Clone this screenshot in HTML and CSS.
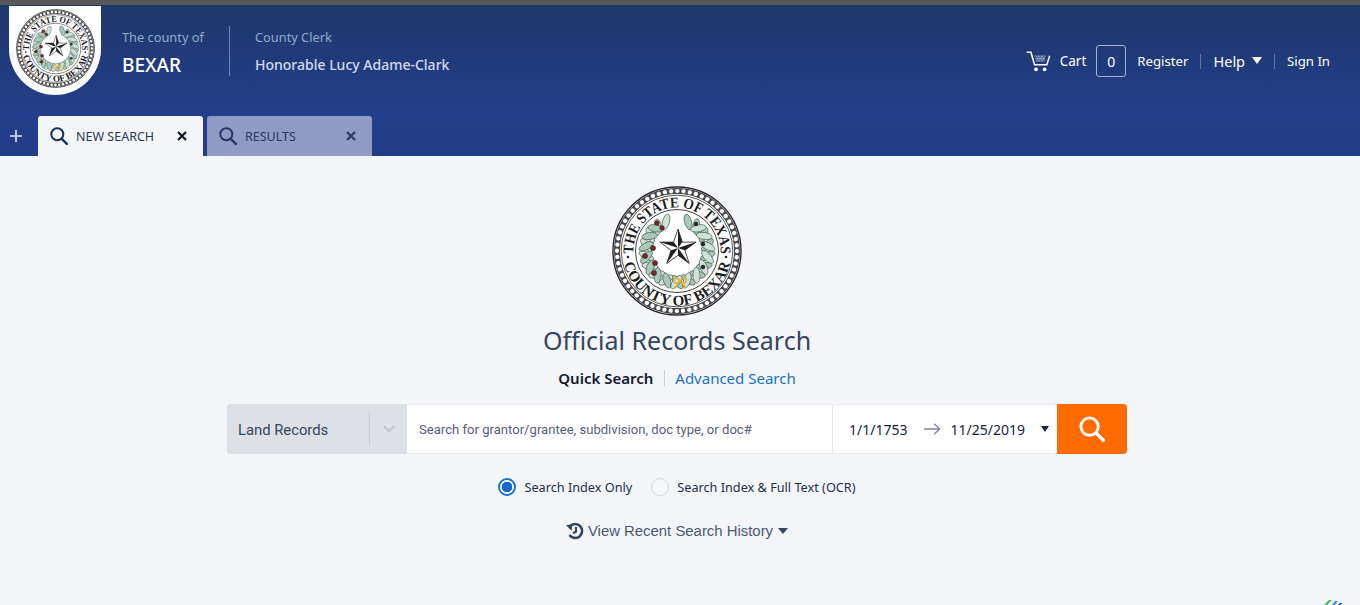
FILE: index.html
```html
<!DOCTYPE html>
<html lang="en">
<head>
<meta charset="utf-8">
<title>Official Records Search</title>
<link rel="stylesheet" href="styles.css">
</head>
<body>
<svg class="defs" width="0" height="0" aria-hidden="true">
  <defs>
    <g id="lp">
      <ellipse cx="59" cy="34.500" rx="3.500" ry="8" transform="rotate(-48 59 34.500)" fill="#a9c9b8" stroke="#2f3d36" stroke-width=".55"/>
      <ellipse cx="71" cy="34.500" rx="3.500" ry="8" transform="rotate(48 71 34.500)" fill="#cfe2d6" stroke="#2f3d36" stroke-width=".55"/>
    </g>
    <symbol id="seal" viewBox="0 0 130 130">
      <circle cx="65" cy="65" r="64" fill="#fff" stroke="#2a2a2c" stroke-width="1.4"/>
      <circle cx="65" cy="65" r="60" fill="none" stroke="#4a4a4c" stroke-width="6"/>
      <circle cx="65" cy="65" r="60" fill="none" stroke="#fff" stroke-width="4.2" stroke-linecap="round" stroke-dasharray="0.1 6.18"/>
      <circle cx="65" cy="65" r="55.8" fill="none" stroke="#2a2a2c" stroke-width=".8"/>
      <circle cx="65" cy="65" r="41.5" fill="none" stroke="#2a2a2c" stroke-width=".9"/>
      <path id="arcTop" d="M65 108.500a43.500 43.500 0 1 1 .01 0" fill="none"/>
      <path id="arcBot" d="M65 10.500a54.500 54.500 0 1 0 .01 0" fill="none"/>
      <text class="seal-text"><textPath href="#arcTop" startOffset="50%" text-anchor="middle" textLength="142" lengthAdjust="spacingAndGlyphs">THE STATE OF TEXAS</textPath></text>
      <text class="seal-text"><textPath href="#arcBot" startOffset="50%" text-anchor="middle" textLength="146" lengthAdjust="spacingAndGlyphs">COUNTY OF BEXAR</textPath></text>
      <circle cx="16" cy="71" r="1.3" fill="#222"/>
      <circle cx="114" cy="71" r="1.3" fill="#222"/>
      <use href="#lp" transform="rotate(190 65 65)"/>
      <use href="#lp" transform="rotate(210 65 65)"/>
      <use href="#lp" transform="rotate(230 65 65)"/>
      <use href="#lp" transform="rotate(250 65 65)"/>
      <use href="#lp" transform="rotate(270 65 65)"/>
      <use href="#lp" transform="rotate(290 65 65)"/>
      <use href="#lp" transform="rotate(310 65 65)"/>
      <use href="#lp" transform="rotate(328 65 65)"/>
      <use href="#lp" transform="rotate(170 65 65)"/>
      <use href="#lp" transform="rotate(150 65 65)"/>
      <use href="#lp" transform="rotate(130 65 65)"/>
      <use href="#lp" transform="rotate(110 65 65)"/>
      <use href="#lp" transform="rotate(90 65 65)"/>
      <use href="#lp" transform="rotate(70 65 65)"/>
      <use href="#lp" transform="rotate(50 65 65)"/>
      <use href="#lp" transform="rotate(32 65 65)"/>
      <g fill="#6d2a2a" stroke="#2b1414" stroke-width=".4">
        <circle cx="45" cy="37" r="2.4"/><circle cx="50" cy="42" r="2.4"/><circle cx="41" cy="62" r="2.6"/>
        <circle cx="33" cy="70" r="2.6"/><circle cx="43" cy="77" r="2.6"/><circle cx="42" cy="87" r="2.6"/>
      </g>
      <g fill="#2b2b2b">
        <circle cx="84" cy="38" r="2.2"/><circle cx="91" cy="58" r="2.2"/><circle cx="91" cy="81" r="2.2"/>
      </g>
      <polygon points="66,43 70.3,56.1 84.1,56.1 72.9,64.3 77.2,77.4 66,69.3 54.8,77.4 59.1,64.3 47.9,56.1 61.7,56.1" fill="#fff" stroke="#1f1f22" stroke-width=".8"/>
      <g fill="#1f1f22">
        <polygon points="66,62 66,43 70.3,56.1"/><polygon points="66,62 84.1,56.1 72.9,64.3"/>
        <polygon points="66,62 77.2,77.4 66,69.3"/><polygon points="66,62 54.8,77.4 59.1,64.3"/>
        <polygon points="66,62 47.9,56.1 61.7,56.1"/>
      </g>
      <path d="M68 95c-4-5-7-4-6 0s4 2 6 0c2 2 5 4 6 0s-2-5-6 0l-6 8M68 95l6 7" fill="none" stroke="#d9b23a" stroke-width="1.6"/>
    </symbol>
    <symbol id="mag" viewBox="0 0 18 18">
      <circle cx="7.3" cy="7.3" r="6" fill="none" stroke="currentColor" stroke-width="2"/>
      <path d="M11.8 11.8l5 5" stroke="currentColor" stroke-width="2.4" stroke-linecap="round"/>
    </symbol>
    <symbol id="cross" viewBox="0 0 10 10">
      <path d="M1 1l8 8M9 1l-8 8" stroke="currentColor" stroke-width="2.2" fill="none"/>
    </symbol>
  </defs>
</svg>

<div class="topline"></div>
<header class="masthead">
  <div class="brand-row">
    <div class="crest"><svg class="crest-seal"><use href="#seal"/></svg></div>
    <div class="brand-block county">
      <div class="brand-label">The county of</div>
      <div class="brand-name">BEXAR</div>
    </div>
    <div class="brand-block clerk">
      <div class="brand-label">County Clerk</div>
      <div class="brand-person">Honorable Lucy Adame-Clark</div>
    </div>
    <nav class="user-nav">
      <svg class="cart-icon" viewBox="0 0 25 21">
        <path d="M.7 1.2h4.2l3.7 12.6h12.2l2.9-9" fill="none" stroke="#fff" stroke-width="1.5"/>
        <path d="M8 5h12M9 7.5h10M10 10h8M10 5l3 5M13 5l3 5M16 5l3 5M19 5l-3 5M16 5l-3 5M13 5l-3 5" stroke="#b9c6de" stroke-width=".6"/>
        <circle cx="10" cy="18.3" r="1.9" fill="#fff"/><circle cx="18.6" cy="18.3" r="1.9" fill="#fff"/>
      </svg>
      <span class="cart-label">Cart</span>
      <span class="cart-count">0</span>
      <a class="nav-link register">Register</a>
      <span class="nav-sep"></span>
      <a class="nav-link help">Help</a>
      <span class="caret caret-white"></span>
      <span class="nav-sep"></span>
      <a class="nav-link">Sign In</a>
    </nav>
  </div>
  <div class="tab-row">
    <svg class="plus" viewBox="0 0 12 12"><path d="M6 0v12M0 6h12" stroke="#dfe5f2" stroke-width="1.6"/></svg>
    <div class="tab tab-active">
      <svg class="tab-mag"><use href="#mag"/></svg>
      <span class="tab-title">NEW SEARCH</span>
      <svg class="tab-x"><use href="#cross"/></svg>
    </div>
    <div class="tab tab-idle">
      <svg class="tab-mag"><use href="#mag"/></svg>
      <span class="tab-title">RESULTS</span>
      <svg class="tab-x"><use href="#cross"/></svg>
    </div>
  </div>
</header>

<main class="content">
  <svg class="main-seal"><use href="#seal"/></svg>
  <h1 class="title">Official Records Search</h1>
  <div class="mode-links">
    <a class="mode-active">Quick Search</a>
    <a class="mode-link">Advanced Search</a>
  </div>
  <form class="search-bar">
    <div class="category">
      <span class="category-text">Land Records</span>
      <span class="category-arrow">
        <svg viewBox="0 0 12 8" class="chev"><path d="M1 1.2l5 5 5-5" fill="none" stroke="#c2c6cd" stroke-width="2"/></svg>
      </span>
    </div>
    <div class="query">Search for grantor/grantee, subdivision, doc type, or doc#</div>
    <div class="dates">
      <span>1/1/1753</span>
      <svg class="arrow" viewBox="0 0 17 12"><path d="M0 6h15.5M10 .8L15.8 6 10 11.2" fill="none" stroke="#7d8699" stroke-width="1.3"/></svg>
      <span>11/25/2019</span>
      <span class="caret caret-dark"></span>
    </div>
    <div class="go">
      <svg class="go-icon"><use href="#mag"/></svg>
    </div>
  </form>
  <div class="radios">
    <span class="radio radio-on"></span><span class="radio-text">Search Index Only</span>
    <span class="radio radio-off"></span><span class="radio-text">Search Index &amp; Full Text (OCR)</span>
  </div>
  <div class="history">
    <svg class="history-icon" viewBox="0 0 18 18">
      <path d="M4 4.2A7 7 0 1 1 3.4 13" fill="none" stroke="#36455f" stroke-width="2.6"/>
      <path d="M0 3.2l6.4-.9-.9 6.4z" fill="#36455f"/>
      <path d="M10 5v4.6l-3 1.6" fill="none" stroke="#36455f" stroke-width="2.2"/>
    </svg>
    <span>View Recent Search History</span>
    <span class="caret caret-slate"></span>
  </div>
</main>

<svg class="corner-mark" viewBox="0 0 22 6">
  <path d="M0 7L6 1h3L3 7z" fill="#4fb35c"/>
  <path d="M8 7l4-5h3l-4 5z" fill="#3d97d6"/>
  <path d="M14 7l2.500-3h3l-2.500 3z" fill="#3c5bb0"/>
</svg>
</body>
</html>
```
FILE: styles.css
```css
* { box-sizing: border-box; }
html, body { margin: 0; height: 605px; overflow: hidden; }
body { background: #f4f5f8; font-family: "Noto Sans", sans-serif; position: relative; }
.defs { position: absolute; }
.seal-text { font-family: "Liberation Serif", serif; font-weight: 700; font-size: 15px; fill: #1c1c1f; }

.topline { height: 5px; background: #58585a; }
.masthead { height: 151px; background: linear-gradient(180deg, #1d3869 0%, #233e8a 70%, #223c88 100%); display: flex; flex-direction: column; }
.brand-row { height: 111px; display: flex; align-items: flex-start; padding: 0 30px 0 9px; }
.crest { width: 92px; height: 89px; margin-top: 1px; background: #fff; border-radius: 0 0 46px 46px; display: flex; justify-content: center; padding-top: 3px; flex: none; }
.crest-seal { width: 79px; height: 79px; }
.brand-block { display: flex; flex-direction: column; margin-top: 21px; height: 50px; }
.county { margin-left: 21px; width: 108px; border-right: 1px solid #7186ae; }
.clerk { margin-left: 25px; }
.brand-label { font-size: 12.8px; line-height: 22px; color: #8eaccb; }
.brand-name { margin-top: 4px; font-size: 19px; line-height: 26px; font-weight: 500; color: #fff; }
.brand-person { margin-top: 4px; font-size: 14px; line-height: 26px; font-weight: 500; color: #d3dcee; }

.user-nav { margin-left: auto; margin-top: 40px; height: 32px; display: flex; align-items: center; color: #fff; font-size: 13.2px; }
.cart-icon { width: 25px; height: 21px; }
.cart-label { margin-left: 9px; font-size: 13.5px; }
.cart-count { margin-left: 10px; width: 30px; height: 32px; display: flex; align-items: center; justify-content: center; border: 1px solid #a6b3cf; border-radius: 3px; font-size: 14px; }
.nav-link { color: #fff; }
.register { margin-left: 11px; }
.help { font-size: 14.5px; }
.nav-sep { width: 1px; height: 15px; background: #62779f; margin: 0 12px; }
.caret { display: inline-block; width: 0; height: 0; border-style: solid; border-color: transparent; border-bottom-width: 0; }
.caret-white { margin-left: 7px; margin-top: -2px; border-width: 7px 5px 0; border-top-color: #fff; }

.tab-row { height: 40px; display: flex; align-items: flex-end; }
.plus { width: 12px; height: 12px; margin: 0 16px 14px 10px; }
.tab { width: 165px; height: 40px; margin-right: 4px; display: flex; align-items: center; padding: 0 16px 0 12px; border-radius: 3px 3px 0 0; }
.tab-active { background: #f4f5f8; color: #16305f; }
.tab-idle { background: #8e9bc2; color: #25396b; }
.tab-mag { width: 18px; height: 18px; }
.tab-title { margin-left: 8px; font-size: 12.5px; flex: 1; }
.tab-active .tab-title { color: #2a3a56; }
.tab-x { width: 10px; height: 10px; }
.tab-active .tab-x { color: #0d1526; }

.content { display: flex; flex-direction: column; align-items: center; padding-right: 6px; }
.main-seal { width: 130px; height: 130px; margin-top: 30px; }
.title { margin: 7px 0 0; font-size: 25px; line-height: 34px; font-weight: 400; color: #36455f; }
.mode-links { margin-top: 13px; display: flex; align-items: center; font-size: 15px; line-height: 16px; }
.mode-active { font-weight: 600; color: #10192e; padding-right: 11px; border-right: 1px solid #c9ced8; }
.mode-link { color: #1a72c0; padding-left: 10px; }

.search-bar { margin-top: 18px; width: 900px; height: 50px; display: flex; border: 1px solid #e6e8ec; border-width: 1px 0; border-radius: 4px; background: #fff; }
.category { width: 180px; margin-top: -1px; margin-bottom: -1px; background: #dde0e5; border-radius: 4px 0 0 4px; display: flex; align-items: center; padding-left: 11px; font-family: Roboto, sans-serif; font-size: 14.8px; color: #36455f; }
.category-text { width: 131px; padding-top: 1px; }
.category-arrow { flex: none; height: 32px; width: 38px; border-left: 1px solid #c6cad1; display: flex; align-items: center; justify-content: center; }
.chev { width: 12px; height: 8px; }
.query { width: 426px; padding-left: 12px; display: flex; align-items: center; border-right: 1px solid #e6e8ec; font-family: Roboto, sans-serif; font-size: 13.1px; color: #566078; }
.dates { flex: 1; display: flex; align-items: center; padding-left: 16px; font-size: 14px; color: #16233f; }
.arrow { width: 17px; height: 12px; margin: 0 9px 0 17px; }
.caret-dark { margin-left: 16px; border-width: 6px 4.5px 0; border-top-color: #16233f; }
.go { width: 70px; margin: -1px 0; background: #ff6b00; border-radius: 0 4px 4px 0; display: flex; align-items: center; justify-content: center; color: #fff; }
.go-icon { width: 26px; height: 26px; }

.radios { margin-top: 24px; display: flex; align-items: center; font-size: 12.7px; line-height: 18px; color: #1f2e4d; }
.radio { width: 18px; height: 18px; border-radius: 50%; flex: none; }
.radio-on { background: radial-gradient(circle, #1268cf 0 5px, #fff 5.5px); border: 2px solid #1b72d6; }
.radio-off { margin-left: 19px; background: #f6f7f9; border: 1px solid #d3d6dc; }
.radio-text { margin-left: 8px; }

.history { margin-top: 26px; display: flex; align-items: center; font-family: "Liberation Sans", sans-serif; font-size: 14.9px; line-height: 18px; color: #4b5971; }
.history-icon { width: 18px; height: 18px; margin-right: 4px; }
.caret-slate { margin-left: 5px; border-width: 6px 5px 0; border-top-color: #36455f; }

.corner-mark { position: absolute; right: 15px; bottom: 0; width: 22px; height: 6px; }
```
